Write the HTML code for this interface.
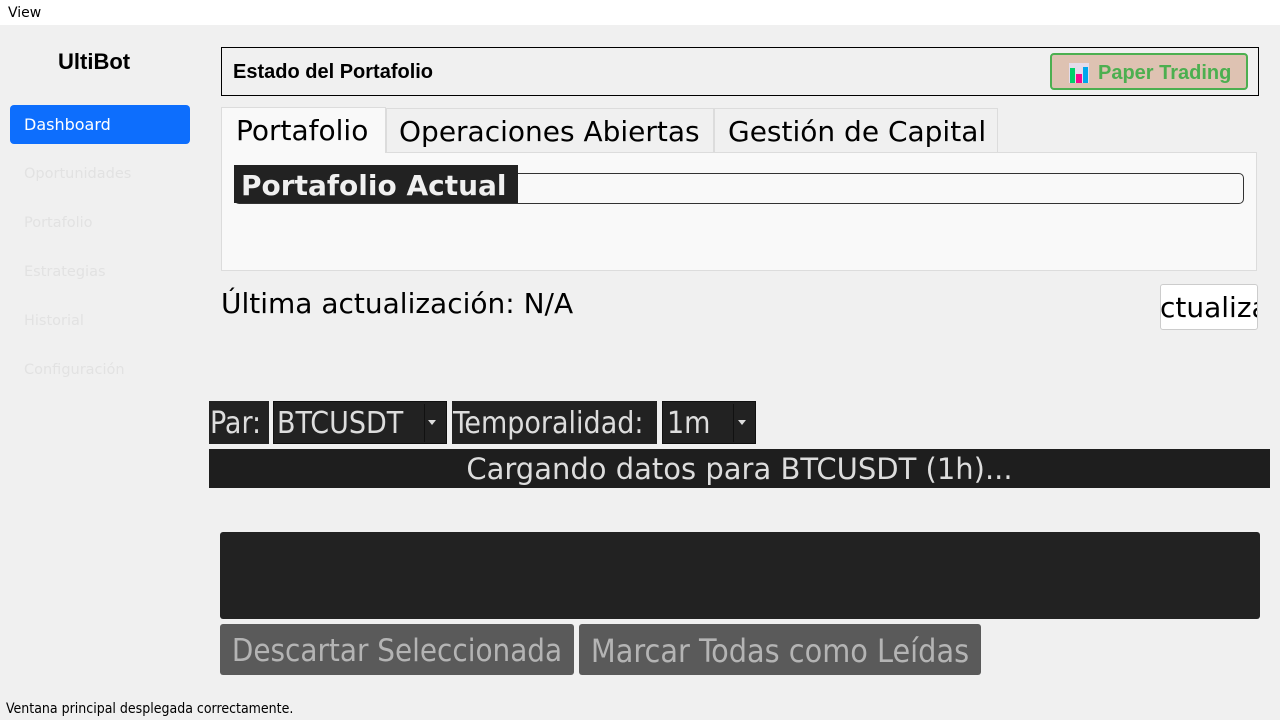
<!DOCTYPE html>
<html><head><meta charset="utf-8"><style>
*{margin:0;padding:0;box-sizing:border-box}
body{width:1280px;height:720px;background:#f0f0f0;font-family:"DejaVu Sans","Liberation Sans",sans-serif;position:relative;overflow:hidden;color:#000}
.a{position:absolute;white-space:nowrap}
.cond{font-family:"DejaVu Sans Condensed","DejaVu Sans",sans-serif;font-stretch:condensed}
</style></head><body>
<div class="a" style="left:0;top:0;width:1280px;height:25px;background:#fff"></div>
<div class="a" style="left:8px;top:5px;font-size:14px">View</div>

<div class="a" style="left:58px;top:49px;font-size:22px;font-weight:bold;font-family:'Liberation Sans',sans-serif">UltiBot</div>
<div class="a" style="left:10px;top:105px;width:180px;height:39px;background:#0d6efd;border-radius:4px"></div>
<div class="a" style="left:24px;top:115px;font-size:16px;color:#fff">Dashboard</div>
<div class="a" style="left:24px;top:166px;font-size:14.5px;color:#e2e2e2">Oportunidades</div>
<div class="a" style="left:24px;top:215px;font-size:14.5px;color:#e2e2e2">Portafolio</div>
<div class="a" style="left:24px;top:264px;font-size:14.5px;color:#e2e2e2">Estrategias</div>
<div class="a" style="left:24px;top:313px;font-size:14.5px;color:#e2e2e2">Historial</div>
<div class="a" style="left:24px;top:362px;font-size:14.5px;color:#e2e2e2">Configuración</div>

<div class="a" style="left:221px;top:47px;width:1038px;height:49px;border:1px solid #000"></div>
<div class="a" style="left:233px;top:61px;font-size:20px;font-weight:bold;font-family:'Liberation Sans',sans-serif">Estado del Portafolio</div>
<div class="a" style="left:1050px;top:53px;width:198px;height:37px;background:#dec2b2;border:2px solid #4caf50;border-radius:4px"></div>
<svg class="a" style="left:1068px;top:62px" width="22" height="22" viewBox="0 0 22 22"><rect x="1" y="1" width="20" height="20" fill="#e4dcec"/><rect x="2" y="6" width="5" height="15" fill="#00d26a"/><rect x="8" y="12" width="6" height="9" fill="#f70a8d"/><rect x="15" y="5" width="5" height="16" fill="#00a6ed"/></svg>
<div class="a" style="left:1098px;top:62px;font-size:20px;font-weight:bold;color:#4caf50;font-family:'Liberation Sans',sans-serif">Paper Trading</div>

<div class="a" style="left:221px;top:152px;width:1036px;height:119px;background:#f9f9f9;border:1px solid #dcdcdc"></div>
<div class="a" style="left:221px;top:107px;width:165px;height:46px;background:#f9f9f9;border:1px solid #dcdcdc;border-bottom:none"></div>
<div class="a" style="left:386px;top:108px;width:328px;height:44px;background:#f0f0f0;border:1px solid #dcdcdc;border-bottom:none"></div>
<div class="a" style="left:714px;top:108px;width:284px;height:44px;background:#f0f0f0;border:1px solid #dcdcdc;border-bottom:none"></div>
<div class="a" style="left:236px;top:114px;font-size:28px">Portafolio</div>
<div class="a" style="left:399px;top:115px;font-size:28px">Operaciones Abiertas</div>
<div class="a" style="left:728px;top:115px;font-size:28px">Gestión de Capital</div>

<div class="a" style="left:234px;top:173px;width:1010px;height:31px;border:1px solid #333;border-radius:5px"></div>
<div class="a" style="left:234px;top:165px;width:284px;height:38px;background:#222"></div>
<div class="a" style="left:241px;top:169px;font-size:28px;font-weight:bold;color:#f0f0f0">Portafolio Actual</div>

<div class="a" style="left:221px;top:287px;font-size:28px">Última actualización: N/A</div>
<div class="a" style="left:1160px;top:284px;width:98px;height:46px;background:#fff;border:1px solid #ccc;border-radius:3px;overflow:hidden"><div class="a" style="left:-1px;top:6px;font-size:28px">ctualizar</div></div>

<div class="a cond" style="left:209px;top:401px;width:60px;height:43px;background:#222"></div>
<div class="a cond" style="left:210px;top:406px;font-size:30px;color:#ddd">Par:</div>
<div class="a" style="left:273px;top:401px;width:174px;height:43px;background:#222;border:1px solid #111"></div>
<div class="a" style="left:424px;top:404px;width:20px;height:38px;border-left:1px solid #111"></div>
<div class="a cond" style="left:277px;top:406px;font-size:30px;color:#ddd">BTCUSDT</div>
<div class="a" style="left:428px;top:420px;border:4px solid transparent;border-top:5px solid #ddd"></div>
<div class="a" style="left:452px;top:401px;width:205px;height:43px;background:#222"></div>
<div class="a cond" style="left:453px;top:406px;font-size:30px;color:#ddd">Temporalidad:</div>
<div class="a" style="left:662px;top:401px;width:94px;height:43px;background:#222;border:1px solid #111"></div>
<div class="a" style="left:733px;top:404px;width:20px;height:38px;border-left:1px solid #111"></div>
<div class="a cond" style="left:667px;top:406px;font-size:30px;color:#ddd">1m</div>
<div class="a" style="left:738px;top:420px;border:4px solid transparent;border-top:5px solid #ddd"></div>

<div class="a" style="left:209px;top:449px;width:1061px;height:39px;background:#1e1e1e"></div>
<div class="a" style="left:209px;top:452px;width:1061px;text-align:center;font-size:29px;color:#ddd">Cargando datos para BTCUSDT (1h)...</div>

<div class="a" style="left:220px;top:532px;width:1040px;height:87px;background:#222;border-radius:3px"></div>
<div class="a" style="left:220px;top:624px;width:354px;height:51px;background:#5a5a5a;border-radius:3px"></div>
<div class="a cond" style="left:220px;top:633px;width:354px;text-align:center;font-size:31px;color:#b4b4b4">Descartar Seleccionada</div>
<div class="a" style="left:579px;top:624px;width:402px;height:51px;background:#5a5a5a;border-radius:3px"></div>
<div class="a cond" style="left:579px;top:632px;width:402px;text-align:center;font-size:32px;color:#b4b4b4">Marcar Todas como Leídas</div>

<div class="a cond" style="left:6px;top:701px;font-size:14px">Ventana principal desplegada correctamente.</div>
</body></html>
